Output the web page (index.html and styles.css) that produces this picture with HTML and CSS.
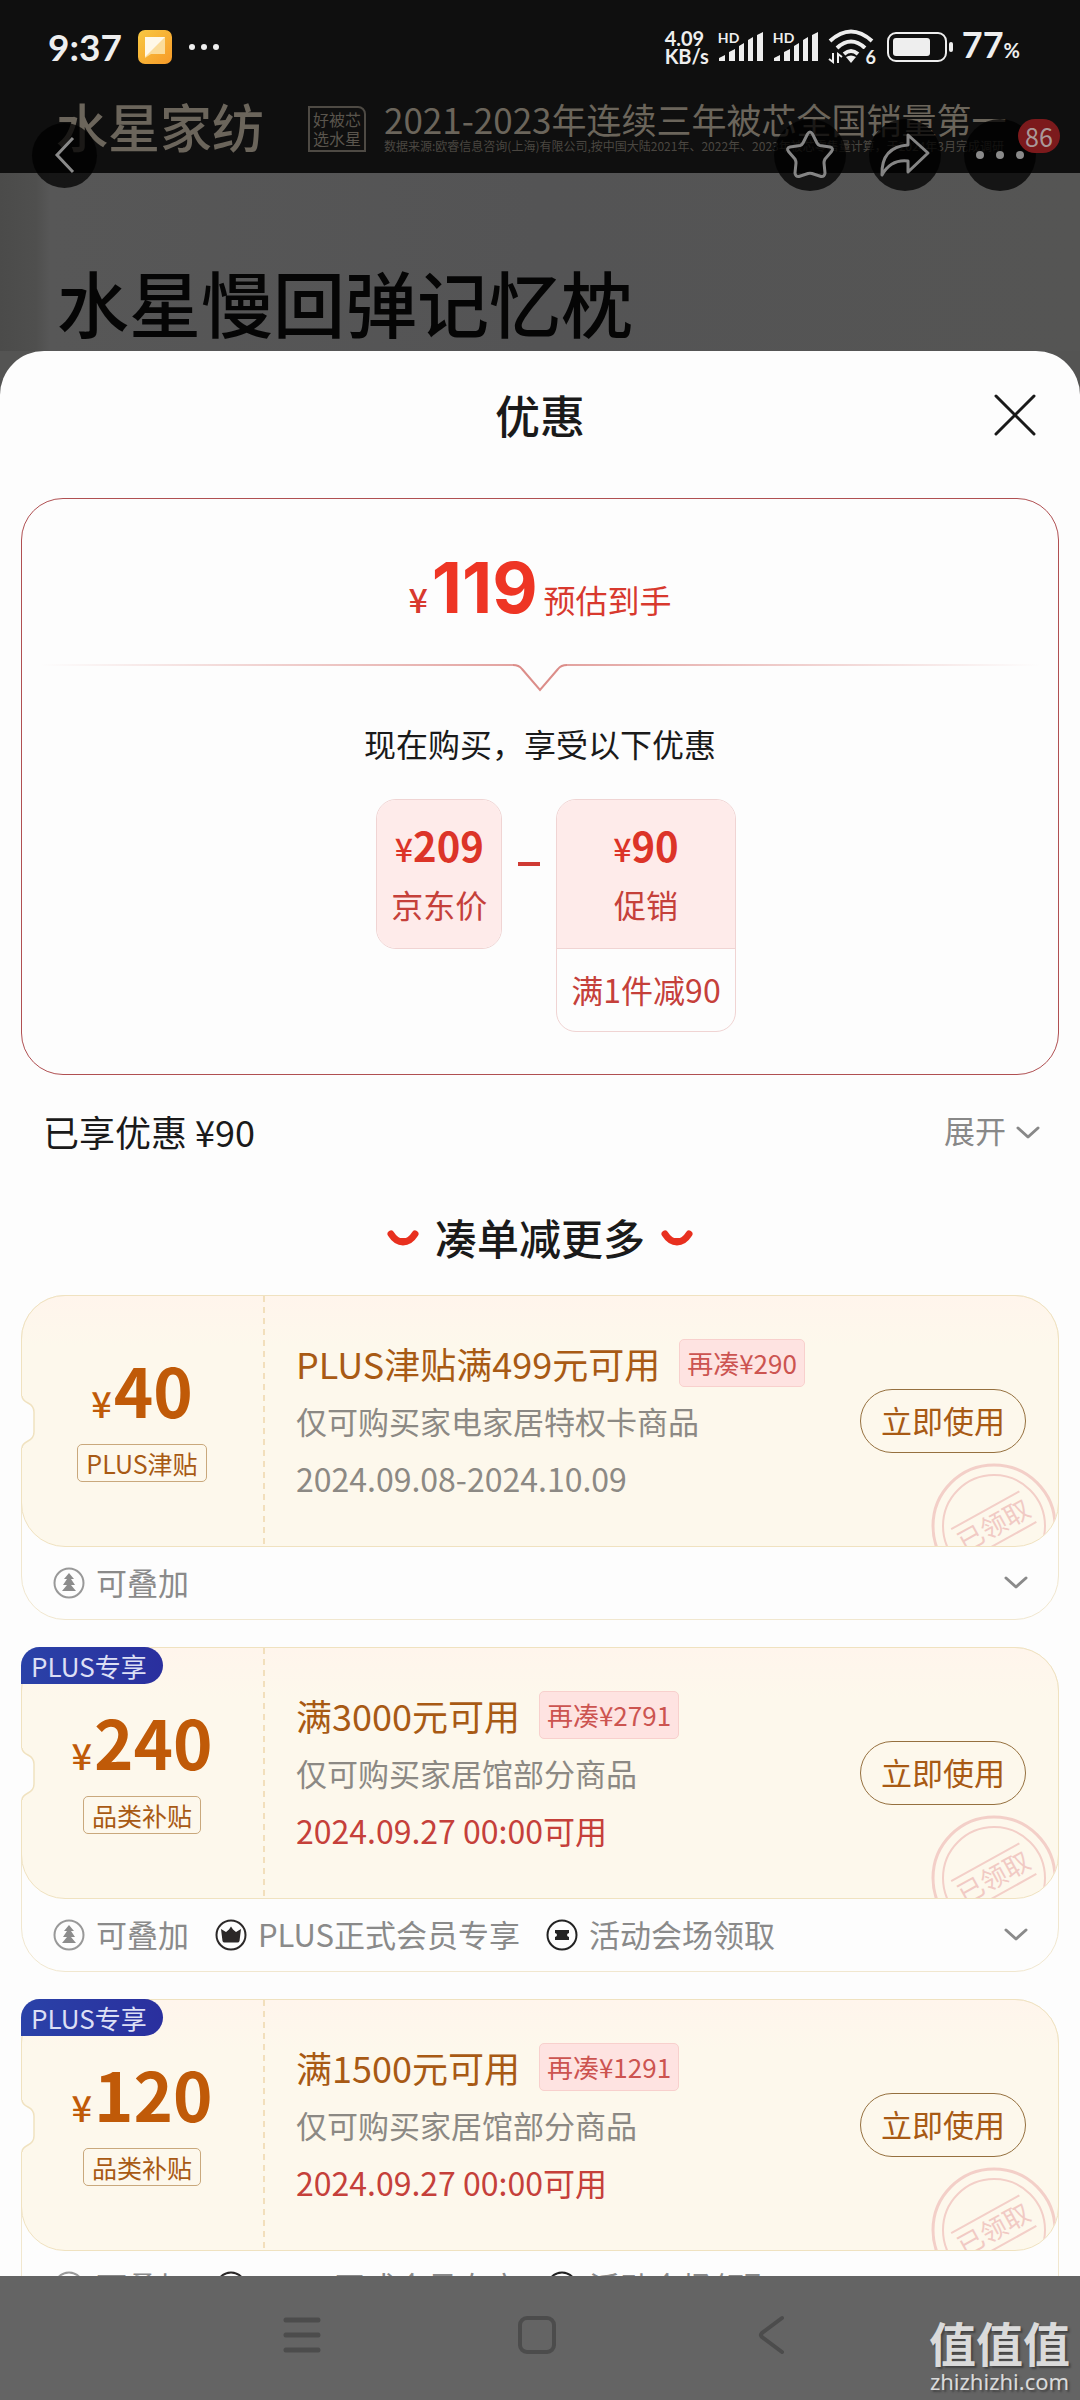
FILE: index.html
```html
<!DOCTYPE html>
<html lang="zh-CN">
<head>
  <meta charset="UTF-8">
  <meta name="viewport" content="width=device-width, initial-scale=1.0">
  <title>优惠</title>
  <link rel="stylesheet" href="styles.css">
</head>
<body>
  <!-- Shared icons -->
  <svg class="sprite" width="0" height="0">
    <symbol id="chevron" viewBox="0 0 24 14">
      <path d="M2 2 L12 11 L22 2" fill="none" stroke="currentColor" stroke-width="3" stroke-linecap="round" stroke-linejoin="round"/>
    </symbol>
    <symbol id="stack" viewBox="0 0 32 32">
      <circle cx="16" cy="16" r="14.5" fill="none" stroke="#999" stroke-width="2"/>
      <path d="M16 6 L21 12 H18 L22 18 H18 L23 24 H9 L14 18 H10 L14 12 H11 Z" fill="#8c8c8c"/>
    </symbol>
    <symbol id="crown" viewBox="0 0 32 32">
      <circle cx="16" cy="16" r="14.5" fill="none" stroke="#2b2828" stroke-width="2"/>
      <path d="M6 10 L11 13 L14 10.500 L16 7.500 L18 10.500 L21 13 L26 10 L24.500 22 Q24 23.500 22.500 23.500 H9.500 Q8 23.500 7.500 22 Z" fill="#2b2828"/>
    </symbol>
    <symbol id="ticket" viewBox="0 0 32 32">
      <circle cx="16" cy="16" r="14.5" fill="none" stroke="#222" stroke-width="2"/>
      <path d="M9 11 H23 V14 Q21 14.500 21 16 Q21 17.500 23 18 V21 H9 V18 Q11 17.500 11 16 Q11 14.500 9 14 Z" fill="#222"/>
    </symbol>
    <symbol id="signal" viewBox="0 0 46 32">
      <path d="M1 30 V27 L7 24 V30 Z M11 30 V21 L17 18 V30 Z M21 30 V15 L26 12 V30 Z M30 30 V9 L35 6 V30 Z M39 30 V4 L45 1 V30 Z" fill="#eee"/>
    </symbol>
    <symbol id="notch" viewBox="0 0 14 52">
      <path d="M0 0 H1 Q1 4 7 7 Q13 10 13 16 V36 Q13 42 7 45 Q1 48 1 52 H0 Z" fill="#fdfdfd"/>
      <path d="M1 0 Q1 4 7 7 Q13 10 13 16 V36 Q13 42 7 45 Q1 48 1 52" fill="none" stroke="#f0e2c0" stroke-width="1.5"/>
    </symbol>
    <symbol id="smile" viewBox="0 0 32 18">
      <path d="M4 4 Q9 12 16 12 Q23 12 28 4" fill="none" stroke="#e8301f" stroke-width="7" stroke-linecap="round"/>
      <path d="M5 8 Q16 22 27 8 Z" fill="#e8301f"/>
    </symbol>
    <symbol id="stamp" viewBox="0 0 126 126">
      <g fill="none" stroke="#f3cfc8">
        <circle cx="63" cy="63" r="61" stroke-width="3"/>
        <circle cx="63" cy="63" r="51" stroke-width="2"/>
        <g transform="rotate(-29 63 63)" stroke-width="2">
          <path d="M24 45 H102 M24 80 H102"/>
        </g>
      </g>
      <text x="63" y="72" transform="rotate(-29 63 63)" text-anchor="middle" font-size="26" fill="#f1cac4">已领取</text>
    </symbol>
  </svg>

  <header class="hero">
    <div class="status-bar">
      <div class="status-left">
        <span class="clock">9:37</span>
        <svg width="34" height="34" viewBox="0 0 34 34">
          <defs>
            <linearGradient id="app" x1="0" y1="0" x2="1" y2="1">
              <stop offset="0" stop-color="#f8c842"/>
              <stop offset="1" stop-color="#f79a28"/>
            </linearGradient>
          </defs>
          <rect width="34" height="34" rx="7" fill="url(#app)"/>
          <path d="M7 7 H27 V24 H13 L7 28 Z" fill="#fbdc9a"/>
          <path d="M7 7 H27 L7 27 Z" fill="#fff8e8"/>
        </svg>
        <svg width="32" height="8" viewBox="0 0 32 8" fill="#eee">
          <circle cx="4" cy="4" r="3"/>
          <circle cx="16" cy="4" r="3"/>
          <circle cx="28" cy="4" r="3"/>
        </svg>
      </div>
      <div class="status-right">
        <div class="speed"><span>4.09</span><span>KB/s</span></div>
        <div class="network"><small>HD</small><svg width="46" height="32"><use href="#signal"/></svg></div>
        <div class="network"><small>HD</small><svg width="46" height="32"><use href="#signal"/></svg></div>
        <div class="wifi">
          <svg width="46" height="36" viewBox="0 0 46 36" fill="none" stroke="#eee" stroke-width="4">
            <path d="M2 12 Q23 -7 44 12"/>
            <path d="M9 19 Q23 6 37 19"/>
            <path d="M16 25 Q23 19 30 25"/>
            <path d="M18 28 Q23 25 28 28 L23 34 Z" fill="#eee" stroke="none"/>
            <path d="M5 24 V33 L1 30 M10 34 V25 L14 28" stroke-width="2"/>
          </svg>
          <small>6</small>
        </div>
        <svg class="battery" width="66" height="30" viewBox="0 0 66 30">
          <rect x="1" y="1" width="58" height="28" rx="8" fill="none" stroke="#eee" stroke-width="2"/>
          <rect x="6" y="6" width="37" height="18" rx="3" fill="#eee"/>
          <rect x="62" y="10" width="4" height="10" rx="2" fill="#eee"/>
        </svg>
        <span class="percent">77<small>%</small></span>
      </div>
    </div>

    <div class="brand-bar">
      <span class="brand">水星家纺</span>
      <span class="brand-seal"><span>好被芯</span><span>选水星</span></span>
      <div class="brand-claim">
        <p>2021-2023年连续三年被芯全国销量第一</p>
        <small>数据来源:欧睿信息咨询(上海)有限公司,按中国大陆2021年、2022年、2023年被芯零售量计算，于2024年3月完成调研</small>
      </div>
    </div>

    <h1 class="product">水星慢回弹记忆枕</h1>

    <nav class="actions">
      <button class="round back" aria-label="返回">
        <svg width="22" height="38" viewBox="0 0 22 38"><path d="M19 2 L3 19 L19 36" fill="none" stroke="#8a8a8a" stroke-width="3"/></svg>
      </button>
      <button class="round" aria-label="收藏">
        <svg width="50" height="50" viewBox="0 0 50 50"><path d="M22.500 4 Q25 0 27.500 4 L32 13 Q33 15 35 15.500 L45 17 Q49 18 46.500 21.500 L40 29 Q39 31 39 33 L40 43 Q39.500 47 36 46.500 L27 43.500 Q25 43 23 43.500 L14 46.500 Q10.500 47 10 43 L11 33 Q11 31 10 29 L3.500 21.500 Q1 18 5 17 L15 15.500 Q17 15 18 13 Z" fill="none" stroke="#858585" stroke-width="3"/></svg>
      </button>
      <button class="round" aria-label="分享">
        <svg width="52" height="46" viewBox="0 0 52 46"><path d="M29 3 L49 21 L29 40 V29 Q12 27 3 43 Q2 15 29 13 Z" fill="none" stroke="#858585" stroke-width="3" stroke-linejoin="round"/></svg>
      </button>
      <button class="round" aria-label="更多">
        <svg width="50" height="10" viewBox="0 0 50 10" fill="#8a8a8a">
          <circle cx="5" cy="5" r="4"/>
          <circle cx="25" cy="5" r="4"/>
          <circle cx="45" cy="5" r="4"/>
        </svg>
        <span class="count">86</span>
      </button>
    </nav>
  </header>

  <main class="sheet">
    <div class="sheet-header">
      <h2>优惠</h2>
      <button class="close" aria-label="关闭">
        <svg width="42" height="42" viewBox="0 0 42 42"><path d="M2 2 L40 40 M40 2 L2 40" stroke="#1a1a1a" stroke-width="3" stroke-linecap="round"/></svg>
      </button>
    </div>

    <section class="price-card">
      <p class="final-price"><span class="yen">¥</span><strong>119</strong><span class="label">预估到手</span></p>
      <div class="divider">
        <span class="line"></span>
        <svg width="54" height="28" viewBox="0 0 54 28"><path d="M0 1 Q6 1 9 5 L27 26 L45 5 Q48 1 54 1" fill="none" stroke="#dc8d89" stroke-width="2"/></svg>
        <span class="line right"></span>
      </div>
      <p class="price-note">现在购买，享受以下优惠</p>
      <div class="formula">
        <div class="term">
          <div class="term-main"><b><i>¥</i>209</b><span>京东价</span></div>
        </div>
        <span class="minus"></span>
        <div class="term">
          <div class="term-main"><b><i>¥</i>90</b><span>促销</span></div>
          <div class="term-rule">满1件减90</div>
        </div>
      </div>
    </section>

    <div class="summary">
      <span>已享优惠 ¥90</span>
      <button class="expand">展开 <svg width="24" height="14"><use href="#chevron"/></svg></button>
    </div>

    <h3 class="more-title">
      <svg width="32" height="18"><use href="#smile"/></svg>
      凑单减更多
      <svg width="32" height="18"><use href="#smile"/></svg>
    </h3>

    <div class="coupons">
      <article class="coupon">
        <div class="coupon-body">
          <svg class="stamp" width="126" height="126"><use href="#stamp"/></svg>
          <div class="amount">
            <p><i>¥</i>40</p>
            <span class="kind">PLUS津贴</span>
          </div>
          <div class="detail">
            <h4>PLUS津贴满499元可用 <span class="need">再凑¥290</span></h4>
            <p class="scope">仅可购买家电家居特权卡商品</p>
            <p class="date">2024.09.08-2024.10.09</p>
          </div>
          <button class="use">立即使用</button>
        </div>
        <svg class="notch" width="14" height="52"><use href="#notch"/></svg>
        <div class="coupon-foot">
          <span><svg width="32" height="32"><use href="#stack"/></svg>可叠加</span>
          <button class="toggle" aria-label="展开详情"><svg width="24" height="14"><use href="#chevron"/></svg></button>
        </div>
      </article>

      <article class="coupon">
        <div class="coupon-body">
          <svg class="stamp" width="126" height="126"><use href="#stamp"/></svg>
          <div class="amount">
            <p><i>¥</i>240</p>
            <span class="kind">品类补贴</span>
          </div>
          <div class="detail">
            <h4>满3000元可用 <span class="need">再凑¥2791</span></h4>
            <p class="scope">仅可购买家居馆部分商品</p>
            <p class="date soon">2024.09.27 00:00可用</p>
          </div>
          <button class="use">立即使用</button>
        </div>
        <svg class="notch" width="14" height="52"><use href="#notch"/></svg>
        <span class="plus-tag">PLUS专享</span>
        <div class="coupon-foot">
          <span><svg width="32" height="32"><use href="#stack"/></svg>可叠加</span>
          <span><svg width="32" height="32"><use href="#crown"/></svg>PLUS正式会员专享</span>
          <span><svg width="32" height="32"><use href="#ticket"/></svg>活动会场领取</span>
          <button class="toggle" aria-label="展开详情"><svg width="24" height="14"><use href="#chevron"/></svg></button>
        </div>
      </article>

      <article class="coupon">
        <div class="coupon-body">
          <svg class="stamp" width="126" height="126"><use href="#stamp"/></svg>
          <div class="amount">
            <p><i>¥</i>120</p>
            <span class="kind">品类补贴</span>
          </div>
          <div class="detail">
            <h4>满1500元可用 <span class="need">再凑¥1291</span></h4>
            <p class="scope">仅可购买家居馆部分商品</p>
            <p class="date soon">2024.09.27 00:00可用</p>
          </div>
          <button class="use">立即使用</button>
        </div>
        <svg class="notch" width="14" height="52"><use href="#notch"/></svg>
        <span class="plus-tag">PLUS专享</span>
        <div class="coupon-foot">
          <span><svg width="32" height="32"><use href="#stack"/></svg>可叠加</span>
          <span><svg width="32" height="32"><use href="#crown"/></svg>PLUS正式会员专享</span>
          <span><svg width="32" height="32"><use href="#ticket"/></svg>活动会场领取</span>
          <button class="toggle" aria-label="展开详情"><svg width="24" height="14"><use href="#chevron"/></svg></button>
        </div>
      </article>
    </div>
  </main>

  <footer class="system-nav">
    <button aria-label="最近任务">
      <svg width="40" height="40" viewBox="0 0 40 40"><path d="M4 5 H36 M4 20 H36 M4 35 H36" stroke="#4c4c4c" stroke-width="5" stroke-linecap="round"/></svg>
    </button>
    <button aria-label="主屏幕">
      <svg width="40" height="40" viewBox="0 0 40 40"><rect x="3" y="3" width="34" height="34" rx="7" fill="none" stroke="#4c4c4c" stroke-width="4"/></svg>
    </button>
    <button aria-label="返回">
      <svg width="40" height="40" viewBox="0 0 40 40"><path d="M30 3 L10 18 Q8 20 10 22 L30 37" fill="none" stroke="#4c4c4c" stroke-width="4" stroke-linecap="round"/></svg>
    </button>
    <div class="watermark"><strong>值值值</strong><span>zhizhizhi.com</span></div>
  </footer>
</body>
</html>
```
FILE: styles.css
```css
* {
  box-sizing: border-box;
}

body {
  margin: 0;
  height: 100vh;
  display: flex;
  flex-direction: column;
  overflow: hidden;
  background-color: #545453;
  color: #1a1a1a;
  font-family: "Noto Sans CJK SC", sans-serif;
}

h1, h2, h3, h4, p {
  margin: 0;
  font-weight: normal;
}

i {
  font-style: normal;
  line-height: 1;
}

svg {
  display: block;
  flex: none;
}

.sprite {
  position: absolute;
}

button {
  padding: 0;
  border: none;
  background: none;
  color: inherit;
  font-family: inherit;
  cursor: pointer;
}

/* Dimmed product page behind the sheet */
.hero {
  position: relative;
  flex: none;
  height: 351px;
  background: linear-gradient(90deg, #4b4b4a 0, #4f4f4e 36px, #575757 50px, #545455 50%, #555554 100%);
}

.status-bar {
  display: flex;
  justify-content: space-between;
  align-items: center;
  height: 94px;
  padding: 0 60px 0 48px;
  background-color: #0f0f0f;
  color: #eee;
}

.status-left {
  display: flex;
  align-items: center;
  gap: 16px;
}

.clock {
  font: bold 37px/40px Lato, sans-serif;
}

.status-right {
  display: flex;
  align-items: center;
  gap: 9px;
}

.speed {
  display: flex;
  flex-direction: column;
  font: bold 20px/18px Lato, sans-serif;
}

.network {
  position: relative;
}

.network small {
  position: absolute;
  left: 0;
  top: 0;
  font: bold 14px/14px Lato, sans-serif;
}

.wifi {
  position: relative;
}

.wifi small {
  position: absolute;
  right: -2px;
  bottom: 0;
  padding-left: 2px;
  background-color: #0f0f0f;
  font: bold 18px/16px Lato, sans-serif;
}

.battery {
  margin-left: 4px;
}

.percent {
  font: bold 36px/40px Lato, sans-serif;
}

.percent small {
  font-size: 20px;
}

.brand-bar {
  display: flex;
  align-items: center;
  height: 79px;
  padding: 0 0 10px 56px;
  background-color: #0f0f0f;
  color: #6b655b;
  white-space: nowrap;
}

.brand {
  width: 252px;
  padding-bottom: 6px;
  font-size: 52px;
  font-weight: 500;
  line-height: 52px;
}

.brand-seal {
  display: flex;
  flex-direction: column;
  width: 58px;
  margin-right: 18px;
  padding: 2px 0;
  border: 2px solid #4e4a44;
  border-top-right-radius: 8px;
  color: #5a554d;
  font-size: 16px;
  line-height: 19px;
  text-align: center;
}

.brand-claim {
  padding-bottom: 6px;
}

.brand-claim p {
  font-size: 35px;
  line-height: 40px;
}

.brand-claim small {
  display: block;
  color: #4b4741;
  font-size: 12px;
  line-height: 14px;
}

.product {
  padding: 83px 0 0 57px;
  color: #050505;
  font-size: 72px;
  font-weight: 500;
  line-height: 90px;
}

.actions {
  position: absolute;
  top: 119px;
  left: 32px;
  right: 44px;
  display: flex;
  align-items: center;
  gap: 23px;
}

.round {
  position: relative;
  display: flex;
  justify-content: center;
  align-items: center;
  width: 72px;
  height: 72px;
  border-radius: 50%;
  background-color: rgba(0, 0, 0, 0.75);
}

.round.back {
  width: 65px;
  height: 65px;
  margin-right: auto;
}

.count {
  position: absolute;
  top: 0;
  right: -24px;
  width: 42px;
  border-radius: 17px;
  background-color: #7c1a1c;
  color: #a99;
  font-size: 25px;
  line-height: 34px;
}

/* Discount sheet */
.sheet {
  flex: 1;
  min-height: 0;
  overflow: hidden;
  padding: 0 21px;
  border-radius: 44px 44px 0 0;
  background-color: #fdfdfd;
}

.sheet-header {
  position: relative;
  display: flex;
  justify-content: center;
  align-items: center;
  height: 128px;
  margin-bottom: 19px;
}

.sheet-header h2 {
  font-size: 45px;
  font-weight: 500;
  line-height: 60px;
}

.close {
  position: absolute;
  right: 23px;
}

.price-card {
  padding: 49px 18px 42px;
  border: 1px solid #b05052;
  border-radius: 42px;
  color: #c5403a;
  text-align: center;
}

.final-price {
  display: flex;
  justify-content: center;
  align-items: baseline;
  height: 80px;
  color: #d8392e;
}

.final-price .yen {
  font-size: 34px;
  font-weight: 500;
}

.final-price strong {
  margin: 0 6px 0 4px;
  color: #ee3524;
  font: bold 70px/80px Inter, sans-serif;
}

.final-price .label {
  font-size: 32px;
}

.divider {
  display: flex;
  margin-top: 36px;
}

.divider .line {
  flex: 1;
  height: 2px;
  background: linear-gradient(90deg, transparent, #e3a3a0);
}

.divider .line.right {
  background: linear-gradient(270deg, transparent, #e3a3a0);
}

.price-note {
  margin: 31px 0 36px;
  color: #1a1a1a;
  font-size: 32px;
  line-height: 40px;
}

.formula {
  display: flex;
  justify-content: center;
  align-items: flex-start;
  gap: 16px;
  padding-left: 32px;
}

.term {
  overflow: hidden;
  border: 1px solid #f0d4d3;
  border-radius: 20px;
}

.term-main {
  display: flex;
  flex-direction: column;
  gap: 13px;
  padding: 21px 14px 22px;
  background-color: #feebea;
  font-size: 32px;
  line-height: 44px;
}

.term-main b {
  color: #dc3428;
  font-size: 40px;
  line-height: 48px;
}

.term-main i {
  font-size: 32px;
  font-weight: 500;
}

.term-rule {
  padding: 0 14px 2px;
  border-top: 1px solid #f0d4d3;
  font-size: 32px;
  line-height: 80px;
}

.minus {
  width: 22px;
  height: 4px;
  margin-top: 63px;
  background-color: #cf3a34;
}

.summary {
  display: flex;
  justify-content: space-between;
  align-items: center;
  height: 60px;
  margin-top: 27px;
  padding: 0 19px 2px 22px;
  font-size: 36px;
}

.expand {
  display: flex;
  align-items: center;
  gap: 10px;
  padding-bottom: 4px;
  color: #888;
  font-size: 31px;
}

.expand svg {
  margin-top: 8px;
}

.more-title {
  display: flex;
  justify-content: center;
  align-items: center;
  gap: 16px;
  margin: 45px 0 28px;
  font-size: 42px;
  font-weight: 500;
  line-height: 60px;
}

.more-title svg {
  margin-top: 3px;
}

/* Coupons */
.coupons {
  display: flex;
  flex-direction: column;
  gap: 27px;
}

.coupon {
  position: relative;
  border: 1px solid #f1e7cf;
  border-radius: 44px;
}

.coupon-body {
  position: relative;
  display: flex;
  align-items: center;
  overflow: hidden;
  height: 252px;
  margin: -1px;
  border: 1px solid #f0e2c0;
  border-radius: 44px;
  background: linear-gradient(#fff5ec, #fdf8ec 20%, #fdf8ec);
  color: #a85a14;
}

.notch {
  position: absolute;
  left: -1px;
  top: 100px;
}

.stamp {
  position: absolute;
  right: 1px;
  top: 167px;
}

.plus-tag {
  position: absolute;
  left: -1px;
  top: -1px;
  width: 142px;
  padding-left: 10px;
  border-radius: 19px 19px 19px 0;
  background: linear-gradient(90deg, #2a42a8, #2a2f9e);
  color: #dcdff5;
  font-size: 26px;
  line-height: 37px;
}

.amount {
  display: flex;
  flex-direction: column;
  align-items: center;
  align-self: stretch;
  width: 243px;
  padding: 61px 3px 0 0;
  background: repeating-linear-gradient(#f2dfbc 0 6px, transparent 6px 11px) right / 2px 100% no-repeat;
}

.amount p {
  color: #c05a08;
  font-size: 67px;
  font-weight: bold;
  line-height: 64px;
}

.amount i {
  margin-right: 2px;
  font-size: 36px;
  font-weight: 500;
}

.kind {
  margin-top: 23px;
  padding: 0 8px;
  border: 1px solid #c9a87c;
  border-radius: 5px;
  font-size: 25px;
  line-height: 36px;
}

.detail {
  flex: 1;
  align-self: stretch;
  padding: 43px 0 0 31px;
  white-space: nowrap;
}

.detail h4 {
  display: flex;
  align-items: center;
  gap: 19px;
  font-size: 36px;
  line-height: 48px;
}

.need {
  padding: 0 7px;
  border: 1px solid #f8d0cd;
  border-radius: 5px;
  background-color: #fee3e1;
  color: #cc5450;
  font-size: 26px;
  line-height: 46px;
}

.scope {
  margin-top: 12px;
  color: #8c8984;
  font-size: 31px;
  line-height: 44px;
}

.date {
  margin-top: 13px;
  color: #8c8984;
  font-size: 32px;
  line-height: 44px;
}

.date.soon {
  color: #c5403a;
}

.use {
  width: 166px;
  height: 64px;
  margin-right: 32px;
  padding-bottom: 4px;
  border: 1px solid #95703f;
  border-radius: 32px;
  font-size: 31px;
}

.coupon-foot {
  display: flex;
  align-items: center;
  gap: 26px;
  height: 73px;
  padding: 0 30px 0 31px;
  color: #8a8a8a;
  font-size: 31px;
  line-height: 44px;
  white-space: nowrap;
}

.coupon-foot span {
  display: flex;
  align-items: center;
  gap: 11px;
  padding-bottom: 2px;
}

.coupon-foot span svg {
  margin-top: 2px;
}

.toggle {
  margin-left: auto;
}

/* System navigation */
.system-nav {
  position: relative;
  flex: none;
  display: flex;
  justify-content: center;
  align-items: center;
  gap: 195px;
  height: 124px;
  padding: 0 6px 6px 0;
  background-color: #646464;
}

.watermark {
  position: absolute;
  right: 10px;
  bottom: 6px;
  display: flex;
  flex-direction: column;
  align-items: center;
  color: #dadada;
  text-shadow: 2px 2px 2px #444;
}

.watermark strong {
  font-size: 47px;
  line-height: 52px;
}

.watermark span {
  font: 22px/26px "Noto Sans", sans-serif;
}
```
